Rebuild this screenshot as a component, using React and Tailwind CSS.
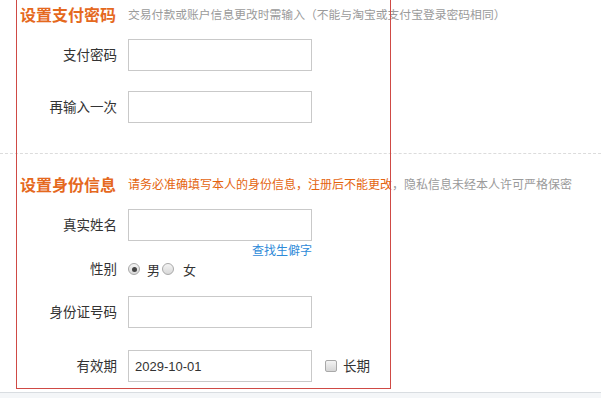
import React, { useState } from "react";

const Field = ({ label, children, className = "" }) => (
  <div className={`flex items-center ${className}`}>
    <div className="w-[117px] text-right text-[13.5px] text-[#333]">{label}</div>
    <div className="ml-[11px] flex items-center">{children}</div>
  </div>
);

const TextBox = ({ value = "" }) => (
  <div className="w-[184px] h-[32px] border border-[#c9c9c9] flex items-center pl-[6px] text-[13px] text-[#333] font-['Liberation_Sans',sans-serif]">
    {value}
  </div>
);

const Radio = ({ checked }) => (
  <span className="w-[12px] h-[12px] rounded-full border border-[#a9a9a9] bg-gradient-to-b from-[#f4f4f4] to-[#d8d8d8] flex items-center justify-center">
    {checked && <span className="w-[5px] h-[5px] rounded-full bg-[#444]" />}
  </span>
);

const App = () => {
  const [gender] = useState("male");

  return (
    <div className="relative w-[601px] h-[398px] bg-white overflow-hidden font-['Noto_Sans_CJK_SC',sans-serif] leading-none">
      <div className="h-[392px]">
        {/* 支付密码 */}
        <div className="h-[28px] flex items-center pl-[20px]">
          <span className="text-[16px] font-bold text-[#e5691e] w-[97px]">设置支付密码</span>
          <span className="ml-[11px] text-[11.8px] text-[#9a9a9a]">
            交易付款或账户信息更改时需输入（不能与淘宝或支付宝登录密码相同）
          </span>
        </div>
        <Field label="支付密码" className="mt-[11px]">
          <TextBox />
        </Field>
        <Field label="再输入一次" className="mt-[20px]">
          <TextBox />
        </Field>

        <div className="mt-[30px] border-t border-dashed border-[#dcdcdc]" />

        {/* 身份信息 */}
        <div className="mt-[16px] h-[28px] flex items-center pl-[20px]">
          <span className="text-[16px] font-bold text-[#e5691e] w-[97px]">设置身份信息</span>
          <span className="ml-[11px] text-[12px] text-[#e4640f]">
            请务必准确填写本人的身份信息，注册后不能更改
            <span className="text-[#9a9a9a]">，隐私信息未经本人许可严格保密</span>
          </span>
        </div>
        <Field label="真实姓名" className="mt-[11px]">
          <TextBox />
        </Field>
        <div className="h-[17px] flex items-center pl-[252px]">
          <span className="text-[12px] text-[#2e8ad8]">查找生僻字</span>
        </div>
        <Field label="性别" className="h-[22px]">
          <div className="flex items-center text-[13px] text-[#333]">
            <Radio checked={gender === "male"} />
            <span className="ml-[7px]">男</span>
            <span className="ml-[2px]">
              <Radio checked={gender === "female"} />
            </span>
            <span className="ml-[9px]">女</span>
          </div>
        </Field>
        <Field label="身份证号码" className="mt-[16px]">
          <TextBox />
        </Field>
        <Field label="有效期" className="mt-[22px]">
          <TextBox value="2029-10-01" />
          <span className="ml-[13px] w-[12px] h-[12px] rounded-[2px] border border-[#a9a9a9] bg-gradient-to-b from-[#f4f4f4] to-[#d6d6d6]" />
          <span className="ml-[6px] text-[13.5px] text-[#333]">长期</span>
        </Field>
      </div>
      <div className="h-[6px] border-t border-[#d9dde1] bg-[#f4f6f8]" />

      {/* annotation box */}
      <div className="absolute left-[16px] top-[-2px] w-[375px] h-[391px] border-[1.5px] border-[#cf4a45] pointer-events-none" />
    </div>
  );
};

export default App;
